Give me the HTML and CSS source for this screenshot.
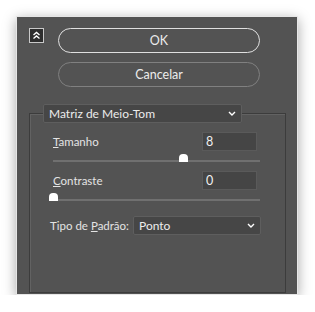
FILE: index.html
```html
<!DOCTYPE html>
<html lang="pt">
<head>
    <meta charset="UTF-8">
    <title>Meio-Tom</title>
    <link rel="stylesheet" href="styles.css">
</head>
<body>
    <div class="dialog">
        <div class="top">
            <button class="collapse" title="Recolher">
                <svg width="9" height="9" viewBox="0 0 9 9">
                    <path d="M1.5 4 L4.5 1.5 L7.5 4 M1.5 7.5 L4.5 5 L7.5 7.5" fill="none" stroke="#fff" stroke-width="1.4"/>
                </svg>
            </button>
            <div class="actions">
                <button class="pill primary">OK</button>
                <button class="pill">Cancelar</button>
            </div>
        </div>

        <fieldset class="group">
            <legend>
                <div class="select wide">
                    <span>Matriz de Meio-Tom</span>
                    <svg class="chev" width="8" height="5" viewBox="0 0 8 5"><path d="M1 1 L4 4 L7 1" fill="none" stroke="#fff" stroke-width="1.4"/></svg>
                </div>
            </legend>

            <div class="field">
                <label><u>T</u>amanho</label>
                <input class="num" type="text" value="8">
            </div>
            <div class="slider">
                <span class="thumb" style="left: 63%"></span>
            </div>

            <div class="field">
                <label><u>C</u>ontraste</label>
                <input class="num" type="text" value="0">
            </div>
            <div class="slider">
                <span class="thumb" style="left: 0%"></span>
            </div>

            <div class="field kind">
                <label>Tipo de <u>P</u>adrão:</label>
                <div class="select">
                    <span>Ponto</span>
                    <svg class="chev" width="8" height="5" viewBox="0 0 8 5"><path d="M1 1 L4 4 L7 1" fill="none" stroke="#fff" stroke-width="1.4"/></svg>
                </div>
            </div>
        </fieldset>
    </div>
</body>
</html>
```

FILE: styles.css
```css
* {
    box-sizing: border-box;
    margin: 0;
    padding: 0;
}

body {
    background-color: #ffffff;
    padding: 16px 0 0 16px;
    font-family: Lato, "Noto Sans", sans-serif;
    font-size: 12px;
    color: #e4e4e4;
}

.dialog {
    width: 282px;
    height: 279px;
    padding: 11px 11px 0 12px;
    background-color: #535353;
    border: 1px solid #e6e6e6;
    box-shadow: 0 3px 12px rgba(0, 0, 0, 0.35);
}

.top {
    display: flex;
    gap: 14px;
}

.collapse {
    width: 15px;
    height: 15px;
    display: flex;
    align-items: center;
    justify-content: center;
    background-color: #2e2e2e;
    border: 1px solid #c9c9c9;
}

.actions {
    display: flex;
    flex-direction: column;
    gap: 9px;
    width: 202px;
}

.pill {
    height: 25px;
    border-radius: 13px;
    background-color: #535353;
    border: 1px solid #808080;
    color: #ececec;
    font-family: inherit;
    font-size: 12.5px;
}

.pill.primary {
    border: 1.5px solid #e0e0e0;
}

.group {
    margin-top: 17px;
    width: 257px;
    height: 189px;
    padding: 0 24px 0 23px;
    border: 1px solid #3c3c3c;
    box-shadow: inset 1px 1px 0 #626262;
}

legend {
    margin-left: -10px;
    padding: 0;
}

label {
    white-space: nowrap;
    font-size: 11.5px;
}

.select {
    display: flex;
    flex-shrink: 0;
    align-items: center;
    justify-content: space-between;
    height: 19px;
    padding: 0 5px 0 5px;
    background-color: #464646;
    border: 1px solid #5e5e5e;
    border-radius: 2px;
    color: #ececec;
}

.select.wide {
    width: 199px;
}

.field {
    display: flex;
    align-items: center;
    justify-content: space-between;
    height: 19px;
    margin-top: 9px;
}

.num {
    width: 55px;
    height: 19px;
    margin-right: 4px;
    padding: 0 3px;
    background-color: #454545;
    border: 1px solid #5a5a5a;
    color: #f0f0f0;
    font-family: inherit;
    font-size: 12.5px;
}

.slider {
    position: relative;
    width: 207px;
    height: 2px;
    margin-top: 9px;
    background-color: #707070;
}

.thumb {
    position: absolute;
    top: -6px;
    width: 9px;
    height: 8px;
    margin-left: -4px;
    background-color: #ffffff;
    border-radius: 4px 4px 0 0;
}

.field.kind {
    margin-top: 15px;
    margin-left: -3px;
}

.field.kind .select {
    width: 128px;
}
```
